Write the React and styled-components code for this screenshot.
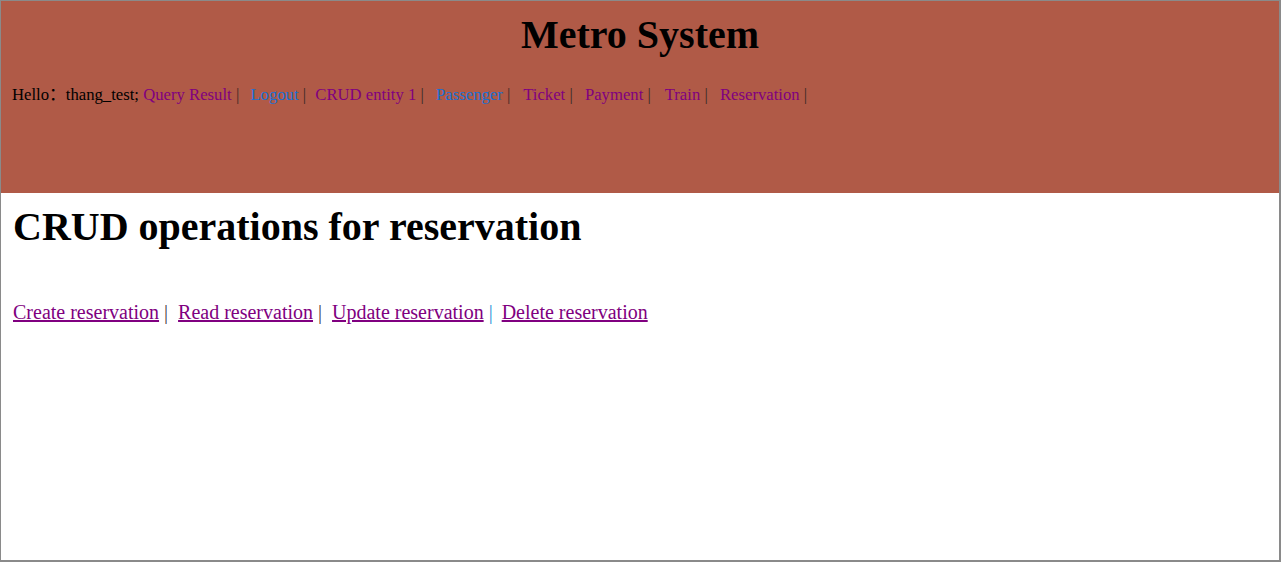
import React from "react";
import styled, { createGlobalStyle } from "styled-components";

const GlobalStyle = createGlobalStyle`
  body {
    margin: 0;
    background: #ffffff;
    font-family: "Liberation Serif", "Times New Roman", "Noto Sans CJK SC", serif;
  }
`;

const Frame = styled.div`
  width: 1281px;
  height: 562px;
  box-sizing: border-box;
  border: 1px solid #8a8a8a;
  border-right-width: 2px;
  border-bottom-width: 2px;
  background: #ffffff;
`;

const Header = styled.div`
  height: 192px;
  box-sizing: border-box;
  background: #b05a47;
  padding: 10px 11px 0 11px;
`;

const Title = styled.h1`
  margin: 0;
  text-align: center;
  font-size: 40px;
  font-weight: bold;
  color: #000000;
`;

const Nav = styled.div`
  margin-top: 27px;
  font-size: 16.7px;
  line-height: 20px;
  color: #000000;
  white-space: pre;
`;

const NavLink = styled.a`
  color: ${(p) => (p.$fresh ? "#1a6fd1" : "#800080")};
  text-decoration: none;
`;

const Sep = styled.span`
  color: ${(p) => p.$color || "#3a2a26"};
  margin-right: ${(p) => p.$after || 0}px;
`;

const Main = styled.div`
  padding: 0 11px;
`;

const PageTitle = styled.h1`
  margin: 10px 0 0 1px;
  font-size: 40px;
  font-weight: bold;
  color: #000000;
`;

const Actions = styled.div`
  margin-top: 51px;
  margin-left: 1px;
  font-size: 20px;
  white-space: pre;
`;

const ActionLink = styled.a`
  color: #800080;
  text-decoration: underline;
`;

const navItems = [
  { label: "Query Result", after: 7 },
  { label: "Logout", fresh: true, after: 5 },
  { label: "CRUD entity 1", after: 8 },
  { label: "Passenger", fresh: true, after: 9 },
  { label: "Ticket", after: 8 },
  { label: "Payment", after: 10 },
  { label: "Train", after: 8 },
  { label: "Reservation", after: 0 },
];

const actions = [
  { label: "Create reservation", sep: "#444444", after: 5 },
  { label: "Read reservation", sep: "#444444", after: 5 },
  { label: "Update reservation", sep: "#2a8fd8", after: 4 },
  { label: "Delete reservation" },
];

export default function App() {
  return (
    <>
      <GlobalStyle />
      <Frame>
        <Header>
          <Title>Metro System</Title>
          <Nav>
            Hello：thang_test;{" "}
            {navItems.map((item) => (
              <React.Fragment key={item.label}>
                <NavLink href="#" $fresh={item.fresh}>
                  {item.label}
                </NavLink>
                <Sep $after={item.after}> |</Sep>
                {item.after ? " " : ""}
              </React.Fragment>
            ))}
          </Nav>
        </Header>
        <Main>
          <PageTitle>CRUD operations for reservation</PageTitle>
          <Actions>
            {actions.map((a) => (
              <React.Fragment key={a.label}>
                <ActionLink href="#">{a.label}</ActionLink>
                {a.sep && (
                  <>
                    <Sep $color={a.sep} $after={a.after}> |</Sep>{" "}
                  </>
                )}
              </React.Fragment>
            ))}
          </Actions>
        </Main>
      </Frame>
    </>
  );
}
